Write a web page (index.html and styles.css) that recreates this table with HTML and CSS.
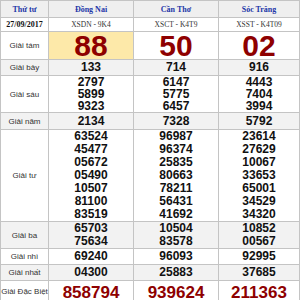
FILE: index.html
```html
<!DOCTYPE html>
<html>
<head>
<meta charset="utf-8">
<link rel="stylesheet" href="styles.css">
</head>
<body>
<div class="kq">
  <div class="c hd">Thứ tư</div>
  <div class="c hd">Đồng Nai</div>
  <div class="c hd">Cần Thơ</div>
  <div class="c hd">Sóc Trăng</div>

  <div class="c date">27/09/2017</div>
  <div class="c code">XSDN - 9K4</div>
  <div class="c code">XSCT - K4T9</div>
  <div class="c code">XSST - K4T09</div>

  <div class="c lb">Giải tám</div>
  <div class="c big hl">88</div>
  <div class="c big">50</div>
  <div class="c big">02</div>

  <div class="c lb g">Giải bảy</div>
  <div class="c n g">133</div>
  <div class="c n g">714</div>
  <div class="c n g">916</div>

  <div class="c lb">Giải sáu</div>
  <div class="c n tight">2797<br>5899<br>9323</div>
  <div class="c n tight">6147<br>5775<br>6457</div>
  <div class="c n tight">4443<br>7404<br>3994</div>

  <div class="c lb g">Giải năm</div>
  <div class="c n g">2134</div>
  <div class="c n g">7328</div>
  <div class="c n g">5792</div>

  <div class="c lb">Giải tư</div>
  <div class="c n">63524<br>45477<br>05672<br>05490<br>10507<br>81100<br>83519</div>
  <div class="c n">96987<br>96374<br>25835<br>80663<br>78211<br>56431<br>41692</div>
  <div class="c n">23614<br>27629<br>10067<br>33653<br>65001<br>34529<br>34320</div>

  <div class="c lb g">Giải ba</div>
  <div class="c n g">65703<br>75634</div>
  <div class="c n g">10504<br>83578</div>
  <div class="c n g">10852<br>00567</div>

  <div class="c lb">Giải nhì</div>
  <div class="c n">69240</div>
  <div class="c n">96093</div>
  <div class="c n">92995</div>

  <div class="c lb g">Giải nhất</div>
  <div class="c n g">04300</div>
  <div class="c n g">25883</div>
  <div class="c n g">37685</div>

  <div class="c lb">Giải Đặc Biệt</div>
  <div class="c db">858794</div>
  <div class="c db">939624</div>
  <div class="c db">211363</div>
</div>
</body>
</html>
```
FILE: styles.css
```css
html, body {
  margin: 0;
  padding: 0;
  background: #fff;
  overflow: hidden;
}
.kq {
  display: grid;
  grid-template-columns: 48px 85px 85px 81px;
  grid-template-rows: 17px 14px 28px 16px 37px 17px 92px 27px 16px 16px 22px;
  border-top: 1px solid #c4c4c4;
  border-left: 1px solid #c4c4c4;
  width: 300px;
  box-sizing: border-box;
}
.c {
  box-sizing: border-box;
  border-right: 1px solid #c4c4c4;
  border-bottom: 1px solid #c4c4c4;
  display: flex;
  align-items: center;
  justify-content: center;
  text-align: center;
  white-space: nowrap;
  overflow: visible;
}
.hd {
  background: #efefef;
  font-family: "Liberation Serif", serif;
  font-weight: bold;
  font-size: 8px;
  color: #2336a8;
}
.date {
  font-family: "Liberation Serif", serif;
  font-weight: bold;
  font-size: 8px;
  color: #111;
}
.code {
  font-family: "Liberation Serif", serif;
  font-size: 7.5px;
  color: #333;
}
.lb {
  font-family: "Liberation Sans", sans-serif;
  font-size: 8px;
  color: #333;
}
.g {
  background: #f2f2f2;
}
.n {
  font-family: "Liberation Sans", sans-serif;
  font-weight: bold;
  font-size: 12px;
  line-height: 13px;
  color: #111;
}
.tight {
  line-height: 12px;
}
.big {
  font-family: "Liberation Sans", sans-serif;
  font-weight: bold;
  font-size: 30px;
  color: #8e0000;
}
.hl {
  background: #fde9a9;
}
.db {
  font-family: "Liberation Sans", sans-serif;
  font-weight: bold;
  font-size: 17px;
  color: #8e0000;
  padding-top: 2px;
}
```
